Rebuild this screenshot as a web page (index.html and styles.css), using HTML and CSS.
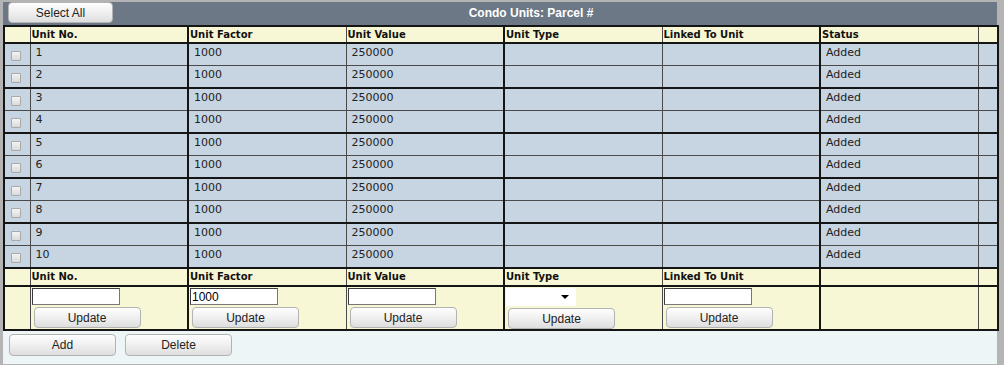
FILE: index.html
```html
<!DOCTYPE html>
<html lang="en">
<head>
  <meta charset="UTF-8">
  <title>Condo Units</title>
  <link rel="stylesheet" href="styles.css">
</head>
<body>
  <div class="panel">
    <!-- Title bar -->
    <div class="titlebar">
      <button class="btn btn-select">Select All</button>
      <span class="title">Condo Units: Parcel #</span>
    </div>

    <table class="units">
      <colgroup>
        <col class="c-check">
        <col class="c-data"><col class="c-data"><col class="c-data">
        <col class="c-data"><col class="c-data"><col class="c-data">
        <col class="c-end">
      </colgroup>
      <thead>
        <tr class="head">
          <th></th>
          <th>Unit No.</th>
          <th>Unit Factor</th>
          <th>Unit Value</th>
          <th>Unit Type</th>
          <th>Linked To Unit</th>
          <th>Status</th>
          <th></th>
        </tr>
      </thead>
      <tbody>
        <tr><td class="chk"><input type="checkbox"></td><td>1</td><td>1000</td><td>250000</td><td></td><td></td><td>Added</td><td></td></tr>
        <tr><td class="chk"><input type="checkbox"></td><td>2</td><td>1000</td><td>250000</td><td></td><td></td><td>Added</td><td></td></tr>
        <tr><td class="chk"><input type="checkbox"></td><td>3</td><td>1000</td><td>250000</td><td></td><td></td><td>Added</td><td></td></tr>
        <tr><td class="chk"><input type="checkbox"></td><td>4</td><td>1000</td><td>250000</td><td></td><td></td><td>Added</td><td></td></tr>
        <tr><td class="chk"><input type="checkbox"></td><td>5</td><td>1000</td><td>250000</td><td></td><td></td><td>Added</td><td></td></tr>
        <tr><td class="chk"><input type="checkbox"></td><td>6</td><td>1000</td><td>250000</td><td></td><td></td><td>Added</td><td></td></tr>
        <tr><td class="chk"><input type="checkbox"></td><td>7</td><td>1000</td><td>250000</td><td></td><td></td><td>Added</td><td></td></tr>
        <tr><td class="chk"><input type="checkbox"></td><td>8</td><td>1000</td><td>250000</td><td></td><td></td><td>Added</td><td></td></tr>
        <tr><td class="chk"><input type="checkbox"></td><td>9</td><td>1000</td><td>250000</td><td></td><td></td><td>Added</td><td></td></tr>
        <tr><td class="chk"><input type="checkbox"></td><td>10</td><td>1000</td><td>250000</td><td></td><td></td><td>Added</td><td></td></tr>
      </tbody>
      <tfoot>
        <tr class="head edit-head">
          <th></th>
          <th>Unit No.</th>
          <th>Unit Factor</th>
          <th>Unit Value</th>
          <th>Unit Type</th>
          <th>Linked To Unit</th>
          <th></th>
          <th></th>
        </tr>
        <tr class="edit-row">
          <td></td>
          <td><input type="text" class="field"><button class="btn btn-update">Update</button></td>
          <td><input type="text" class="field" value="1000"><button class="btn btn-update">Update</button></td>
          <td><input type="text" class="field"><button class="btn btn-update">Update</button></td>
          <td>
            <span class="select-wrap"><select class="type-select"><option></option></select></span>
            <button class="btn btn-update">Update</button>
          </td>
          <td><input type="text" class="field"><button class="btn btn-update">Update</button></td>
          <td></td>
          <td></td>
        </tr>
      </tfoot>
    </table>

    <div class="actions">
      <button class="btn btn-action">Add</button>
      <button class="btn btn-action">Delete</button>
    </div>
  </div>
</body>
</html>
```

FILE: styles.css
```css
/* CSS */
body {
  margin: 0;
  padding: 0;
  font-family: "DejaVu Sans", Verdana, sans-serif;
  background: #fff;
}

.panel {
  width: 994px;
  border-style: solid;
  border-color: #b4b4b4;
  border-width: 2px 7px 3px 3px;
  background: #eef5f6;
}

/* Title bar */
.titlebar {
  display: flex;
  align-items: flex-start;
  height: 23px;
  padding-left: 5px;
  background: #6c7885;
}

.title {
  flex: 1;
  text-align: center;
  padding: 4px 48px 0 0;
  font-family: "Liberation Sans", Arial, sans-serif;
  font-size: 12px;
  font-weight: bold;
  color: #fff;
}

/* Buttons */
.btn {
  font-family: "Liberation Sans", Arial, sans-serif;
  font-size: 12px;
  color: #222;
  background: linear-gradient(#fefefe, #f1f1f1 45%, #dedede);
  border: 1px solid #b3b3b3;
  border-radius: 4px;
  padding: 0;
  cursor: pointer;
}

.btn-select {
  width: 105px;
  height: 21px;
}

.btn-update {
  display: block;
  width: 107px;
  height: 21px;
  margin: 2px 0 0 2px;
}

.btn-action {
  width: 107px;
  height: 22px;
}

/* Table */
.units {
  width: 994px;
  table-layout: fixed;
  border-collapse: collapse;
  border: 2px solid #151515;
  font-size: 11px;
  color: #222;
}

.c-check { width: 26px; }
.c-data { width: 158px; }
.c-end { width: 20px; }

.units th,
.units td {
  border: 1px solid #4a4a4a;
  padding: 0;
  text-align: left;
  vertical-align: top;
  overflow: hidden;
  white-space: nowrap;
}

.units th:nth-child(3),
.units td:nth-child(3),
.units th:nth-child(5),
.units td:nth-child(5),
.units th:nth-child(7),
.units td:nth-child(7) {
  border-left: 2px solid #151515;
}

.units .head th {
  background: #f8f7d5;
  font-size: 10px;
  font-weight: bold;
  color: #111;
  padding: 2px 0 0 1px;
}

thead .head {
  height: 17px;
}

.units thead .head th {
  border-bottom: 2px solid #151515;
}

tbody tr {
  height: 22px;
}

tbody tr:nth-child(even) {
  height: 23px;
}

.units tbody tr:nth-child(even) td,
.units tbody tr:last-child td {
  border-bottom: 2px solid #151515;
}

.units tbody td {
  background: #c7d4e1;
  padding: 2px 0 0 5px;
  color: #222;
}

.units tbody td.chk {
  padding: 7px 0 0 6px;
}

.chk input {
  appearance: none;
  display: block;
  width: 10px;
  height: 10px;
  margin: 0;
  border: 1px solid #a9a9a9;
  border-radius: 1px;
  background: linear-gradient(#f4f4f4, #dadada);
}

.edit-head {
  height: 18px;
}

.units .edit-head th {
  border-bottom: 2px solid #151515;
}

.edit-row {
  height: 42px;
}

.units .edit-row td {
  background: #f8f7d5;
  padding: 1px 0 0 1px;
}

.field {
  display: block;
  box-sizing: border-box;
  width: 88px;
  height: 17px;
  margin: 0;
  padding: 0 1px;
  border: 1px solid #777;
  border-top-color: #3c3c3c;
  border-left-color: #3c3c3c;
  font-family: "Liberation Sans", Arial, sans-serif;
  font-size: 12px;
  color: #000;
  background: #fff;
}

.select-wrap {
  position: relative;
  display: block;
  width: 70px;
}

.type-select {
  appearance: none;
  display: block;
  width: 70px;
  height: 18px;
  margin: 0;
  border: none;
  background: #fff;
}

.select-wrap::after {
  content: "";
  position: absolute;
  right: 7px;
  top: 7px;
  border-style: solid;
  border-width: 4px 4px 0 4px;
  border-color: #000 transparent transparent transparent;
}

/* Bottom actions */
.actions {
  display: flex;
  gap: 9px;
  height: 33px;
  padding: 3px 0 0 6px;
  box-sizing: border-box;
}
```
